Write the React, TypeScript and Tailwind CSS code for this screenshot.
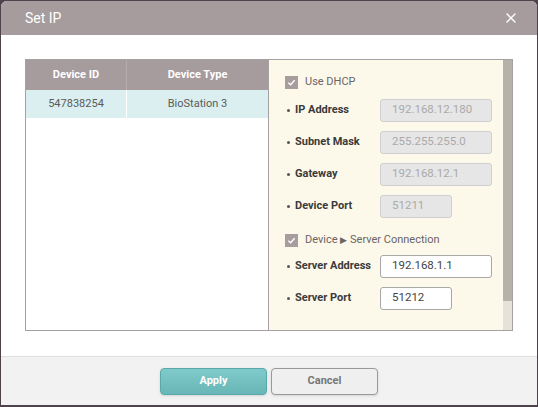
import { X } from "lucide-react"

type Field = { label: string; value: string; wide: boolean; disabled: boolean }

const dhcpFields: Field[] = [
  { label: "IP Address", value: "192.168.12.180", wide: true, disabled: true },
  { label: "Subnet Mask", value: "255.255.255.0", wide: true, disabled: true },
  { label: "Gateway", value: "192.168.12.1", wide: true, disabled: true },
  { label: "Device Port", value: "51211", wide: false, disabled: true },
]

const serverFields: Field[] = [
  { label: "Server Address", value: "192.168.1.1", wide: true, disabled: false },
  { label: "Server Port", value: "51212", wide: false, disabled: false },
]

function Check({ label }: { label: React.ReactNode }) {
  return (
    <div className="flex items-center h-[20px]">
      <span className="w-[13px] h-[13px] bg-[#a79c9e] flex items-center justify-center">
        <svg width="9" height="9" viewBox="0 0 10 10">
          <path d="M1.5 5.2 L4 7.5 L8.5 2.5" fill="none" stroke="white" strokeWidth="1.6" />
        </svg>
      </span>
      <span className="ml-[7px] text-[11px] text-[#6b6466]">{label}</span>
    </div>
  )
}

function Row({ f }: { f: Field }) {
  return (
    <div className="flex items-center h-[32px]">
      <span className="w-[3px] h-[3px] rounded-full bg-[#555] ml-[2px]" />
      <span className="ml-[5px] w-[85px] text-[11px] font-bold text-[#3a3a3a]">{f.label}</span>
      <div
        className={`h-[23px] rounded-[3px] flex items-center px-[11px] text-[11.5px] ${f.wide ? "w-[112px]" : "w-[72px]"} ${
          f.disabled ? "bg-[#e6e6e6] border border-[#cfcfcf] text-[#aaaaaa]" : "bg-white border border-[#a8a8a8] text-[#444]"
        }`}
      >
        {f.value}
      </div>
    </div>
  )
}

export default function App() {
  return (
    <div
      className="w-[538px] h-[407px] bg-[#4e434a] p-[1px] pb-[2px]"
      style={{ fontFamily: "Roboto, 'Liberation Sans', sans-serif" }}
    >
      <div className="w-full h-full rounded-t-[6px] overflow-hidden flex flex-col bg-white">
        <div className="h-[34px] bg-[#a69b9d] flex items-center justify-between pl-[24px] pr-[18px]">
          <span className="text-white text-[14px]">Set IP</span>
          <X className="text-white" size={16} strokeWidth={2} />
        </div>
        <div className="flex-1 bg-white pt-[24px] px-[24px] border-b border-[#dedede]">
          <div className="h-[272px] w-[488px] border border-[#a7a0a2] flex">
            <div className="w-[243px] border-r border-[#a7a0a2] flex flex-col">
              <div className="h-[30px] bg-[#a69b9d] flex text-[11px] font-bold text-white">
                <div className="w-[101px] flex items-center justify-center border-r border-[#b5abad]">Device ID</div>
                <div className="flex-1 flex items-center justify-center">Device Type</div>
              </div>
              <div className="h-[28px] bg-[#dbeff0] flex text-[11px] text-[#5a5a5a]">
                <div className="w-[101px] flex items-center justify-center border-r border-white">547838254</div>
                <div className="flex-1 flex items-center justify-center">BioStation 3</div>
              </div>
            </div>
            <div className="flex-1 bg-[#fcf9eb] flex">
              <div className="flex-1 pl-[16px] pt-[12px]">
                <Check label="Use DHCP" />
                <div className="mt-[2px]">
                  {dhcpFields.map((f) => (
                    <Row key={f.label} f={f} />
                  ))}
                </div>
                <div className="mt-[8px]">
                  <Check
                    label={
                      <>
                        Device <span className="text-[9px]">▶</span> Server Connection
                      </>
                    }
                  />
                </div>
                <div>
                  {serverFields.map((f) => (
                    <Row key={f.label} f={f} />
                  ))}
                </div>
              </div>
              <div className="w-[9px] flex flex-col bg-[#e6e2da]">
                <div className="h-[241px] bg-[#b6b1a9]" />
              </div>
            </div>
          </div>
        </div>
        <div className="h-[48px] bg-[#f2f2f2] flex justify-center items-start pt-[11px] gap-[4px]">
          <button className="w-[107px] h-[27px] rounded-[4px] border border-[#5aa9aa] bg-gradient-to-b from-[#80cacb] to-[#68b6b7] text-white text-[11px] font-bold shadow-sm">
            Apply
          </button>
          <button className="w-[107px] h-[27px] rounded-[4px] border border-[#9a9a9a] bg-[#efefef] text-[#777] text-[11px] font-bold shadow-sm">
            Cancel
          </button>
        </div>
      </div>
    </div>
  )
}
